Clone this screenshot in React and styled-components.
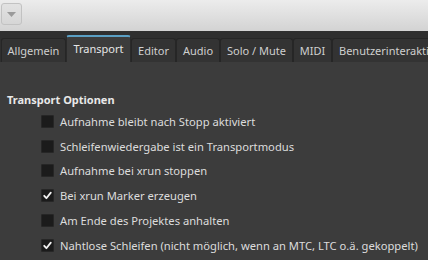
import React from "react";
import styled, { createGlobalStyle } from "styled-components";

const Global = createGlobalStyle`
  html, body { margin: 0; padding: 0; background: #3c3c3c; }
  body { font-family: "Noto Sans", "Open Sans", sans-serif; font-size: 11px; }
  #root { width: 428px; height: 260px; overflow: hidden; }
`;

const Page = styled.div`
  width: 428px;
  height: 260px;
  display: flex;
  flex-direction: column;
  background: #3c3c3c;
  overflow: hidden;
`;

const Header = styled.div`
  height: 31px;
  flex: none;
  background: linear-gradient(#ececec, #d3d3d3);
  padding: 3px 0 0 1px;
  box-sizing: border-box;
`;

const MenuButton = styled.button`
  width: 21px;
  height: 22px;
  padding: 0;
  border: 1px solid #c2c2c2;
  border-radius: 3px;
  background: linear-gradient(#e2e2e2, #d6d6d6);
  display: flex;
  align-items: center;
  justify-content: center;
`;

const TabBar = styled.div`
  height: 31px;
  flex: none;
  background: #2f2f2f;
  display: flex;
  align-items: flex-end;
  padding-left: 1px;
  box-sizing: border-box;
  white-space: nowrap;
`;

const Tab = styled.div`
  flex: none;
  width: ${p => p.$w}px;
  height: ${p => (p.$active ? 27 : 24)}px;
  box-sizing: border-box;
  border: 1px solid ${p => (p.$active ? "#2a2a2a" : "#262626")};
  border-bottom: none;
  border-top: ${p => (p.$active ? "2px solid #5a9fc4" : "1px solid #262626")};
  border-radius: 3px 3px 0 0;
  background: ${p => (p.$active ? "#3c3c3c" : "#333333")};
  color: ${p => (p.$active ? "#e6e6e6" : "#cfcfcf")};
  font-size: 11px;
  display: flex;
  align-items: center;
  justify-content: ${p => (p.$left ? "flex-start" : "center")};
  padding: ${p => (p.$left ? "0 0 0 6px" : "0")};
  padding-bottom: ${p => (p.$active ? "3px" : "0")};
  overflow: hidden;
`;

const Content = styled.div`
  flex: 1;
  padding: 30px 0 0 7px;
  display: flex;
  flex-direction: column;
`;

const SectionTitle = styled.div`
  font-weight: bold;
  color: #e8e8e8;
  font-size: 11px;
  height: 16px;
  line-height: 16px;
  margin-bottom: 1px;
`;

const Row = styled.label`
  display: flex;
  align-items: center;
  gap: 6px;
  height: 24.8px;
  flex: none;
  padding-left: 34px;
  color: #dcdcdc;
  font-size: 11.2px;
  white-space: nowrap;
`;

const Box = styled.span`
  width: 13px;
  height: 13px;
  flex: none;
  box-sizing: border-box;
  background: #1b1b1b;
  border: 1px solid #262626;
  border-radius: 1px;
  display: flex;
  align-items: center;
  justify-content: center;
`;

const tabs = [
  { label: "Allgemein", w: 65 },
  { label: "Transport", w: 65, active: true },
  { label: "Editor", w: 45 },
  { label: "Audio", w: 44 },
  { label: "Solo / Mute", w: 73 },
  { label: "MIDI", w: 39 },
  { label: "Benutzerinteraktion", w: 120, left: true },
];

const options = [
  { label: "Aufnahme bleibt nach Stopp aktiviert", checked: false },
  { label: "Schleifenwiedergabe ist ein Transportmodus", checked: false },
  { label: "Aufnahme bei xrun stoppen", checked: false },
  { label: "Bei xrun Marker erzeugen", checked: true },
  { label: "Am Ende des Projektes anhalten", checked: false },
  { label: "Nahtlose Schleifen (nicht möglich, wenn an MTC, LTC o.ä. gekoppelt)", checked: true },
];

const Check = () => (
  <svg width="11" height="11" viewBox="0 0 11 11">
    <path d="M2.2 5.8 L4.4 8.2 L8.8 2.6" fill="none" stroke="#f2f2f2" strokeWidth="1.8" strokeLinecap="round" strokeLinejoin="round" />
  </svg>
);

export default function App() {
  return (
    <Page>
      <Global />
      <Header>
        <MenuButton>
          <svg width="9" height="5" viewBox="0 0 9 5">
            <path d="M0 0 L9 0 L4.5 5 Z" fill="#9a9a9a" />
          </svg>
        </MenuButton>
      </Header>
      <TabBar>
        {tabs.map(t => (
          <Tab key={t.label} $w={t.w} $active={t.active} $left={t.left}>
            {t.label}
          </Tab>
        ))}
      </TabBar>
      <Content>
        <SectionTitle>Transport Optionen</SectionTitle>
        {options.map(o => (
          <Row key={o.label}>
            <Box>{o.checked && <Check />}</Box>
            {o.label}
          </Row>
        ))}
      </Content>
    </Page>
  );
}
